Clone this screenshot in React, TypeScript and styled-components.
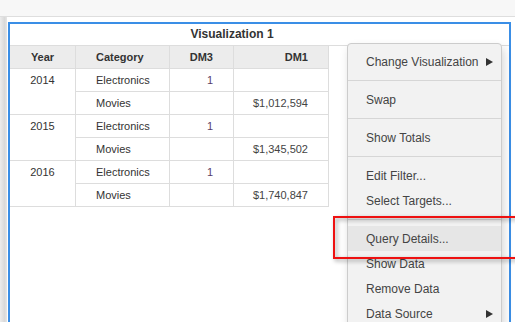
import React from "react";
import styled, { createGlobalStyle } from "styled-components";

const GlobalStyle = createGlobalStyle`
  html, body { margin: 0; padding: 0; background: #ffffff; }
  body { font-family: "Liberation Sans", Arial, sans-serif; }
  * { box-sizing: border-box; }
`;

const Page = styled.div`
  position: relative;
  width: 515px;
  height: 322px;
  overflow: hidden;
  display: grid;
  grid-template-rows: 17px 1fr;
  background: #ffffff;
`;

const TopBar = styled.div`
  background: #f7f7f7;
  border-bottom: 1px solid #dedede;
`;

const Body = styled.div`
  display: flex;
  min-height: 0;
`;

const LeftRail = styled.div`
  width: 7px;
  flex: none;
  background: linear-gradient(to right, #ececec 0%, #d9d9d9 65%, #e6e6e6 100%);
`;

const Main = styled.div`
  flex: 1;
  padding: 5px 4px 0 1px;
`;

const Widget = styled.div`
  position: relative;
  height: 320px;
  border: 2px solid #3a8ee6;
  background: #ffffff;
`;

const Title = styled.div`
  height: 22px;
  line-height: 21px;
  padding-right: 55px;
  text-align: center;
  font-size: 12px;
  font-weight: bold;
  color: #333333;
  border-bottom: 1px solid #dddddd;
`;

const Grid = styled.div`
  display: grid;
  width: 319px;
  grid-template-columns: 66px 94px 64px 95px;
  grid-auto-rows: 23px;
`;

type Align = "left" | "center" | "right";

const HeadCell = styled.div<{ $align: Align }>`
  display: flex;
  align-items: center;
  justify-content: ${(p) =>
    p.$align === "left" ? "flex-start" : p.$align === "right" ? "flex-end" : "center"};
  padding: ${(p) => (p.$align === "left" ? "0 0 0 20px" : p.$align === "right" ? "0 20px 0 0" : "0")};
  background: #ececec;
  border-right: 1px solid #dddddd;
  border-bottom: 1px solid #dddddd;
  font-size: 11px;
  font-weight: bold;
  color: #333333;
`;

const Cell = styled.div<{ $align: Align; $color?: string; $span?: number }>`
  display: flex;
  align-items: flex-start;
  line-height: 22px;
  justify-content: ${(p) =>
    p.$align === "left" ? "flex-start" : p.$align === "right" ? "flex-end" : "center"};
  padding: ${(p) => (p.$align === "left" ? "0 0 0 20px" : p.$align === "right" ? "0 20px 0 0" : "0")};
  grid-row: span ${(p) => p.$span ?? 1};
  border-right: 1px solid #dddddd;
  border-bottom: 1px solid #dddddd;
  font-size: 11px;
  color: ${(p) => p.$color ?? "#333333"};
`;

const Menu = styled.div`
  position: absolute;
  left: 337px;
  top: 19px;
  width: 155px;
  height: 320px;
  background: #f2f2f2;
  border: 1px solid #cccccc;
  border-radius: 4px;
  box-shadow: 2px 5px 10px rgba(0, 0, 0, 0.16);
  font-size: 12px;
  color: #444444;
`;

const MenuGroup = styled.div`
  padding: 6px 0;
  border-bottom: 1px solid #d6d6d6;
  &:first-child { padding-top: 5px; }
  &:last-child { border-bottom: none; }
`;

const MenuItem = styled.div<{ $active?: boolean }>`
  display: flex;
  align-items: center;
  justify-content: space-between;
  height: 25px;
  padding: 0 8px 0 18px;
  background: ${(p) => (p.$active ? "#e6e6e6" : "transparent")};
`;

const Arrow = styled.svg`
  width: 7px;
  height: 8px;
  fill: #333333;
`;

const Callout = styled.div`
  position: absolute;
  left: 333px;
  top: 216px;
  width: 200px;
  height: 43px;
  border: 2px solid #ee1111;
  filter: drop-shadow(2px 2px 2px rgba(0, 0, 0, 0.4));
  pointer-events: none;
`;

const rows = [
  { year: "2014", dm1: "$1,012,594" },
  { year: "2015", dm1: "$1,345,502" },
  { year: "2016", dm1: "$1,740,847" },
];

const groups: { label: string; sub?: boolean; active?: boolean }[][] = [
  [{ label: "Change Visualization", sub: true }],
  [{ label: "Swap" }],
  [{ label: "Show Totals" }],
  [{ label: "Edit Filter..." }, { label: "Select Targets..." }],
  [
    { label: "Query Details...", active: true },
    { label: "Show Data" },
    { label: "Remove Data" },
    { label: "Data Source", sub: true },
  ],
];

export default function App() {
  return (
    <>
      <GlobalStyle />
      <Page>
        <TopBar />
        <Body>
          <LeftRail />
          <Main>
            <Widget>
              <Title>Visualization 1</Title>
              <Grid>
                <HeadCell $align="center">Year</HeadCell>
                <HeadCell $align="left">Category</HeadCell>
                <HeadCell $align="right">DM3</HeadCell>
                <HeadCell $align="right">DM1</HeadCell>
                {rows.map((r) => (
                  <React.Fragment key={r.year}>
                    <Cell $align="center" $span={2}>{r.year}</Cell>
                    <Cell $align="left">Electronics</Cell>
                    <Cell $align="right" $color="#5a3c68">1</Cell>
                    <Cell $align="right" $color="#444444"></Cell>
                    <Cell $align="left">Movies</Cell>
                    <Cell $align="right"></Cell>
                    <Cell $align="right" $color="#444444">{r.dm1}</Cell>
                  </React.Fragment>
                ))}
              </Grid>
              <Menu>
                {groups.map((g, i) => (
                  <MenuGroup key={i}>
                    {g.map((it) => (
                      <MenuItem key={it.label} $active={it.active}>
                        <span>{it.label}</span>
                        {it.sub && (
                          <Arrow viewBox="0 0 7 8">
                            <polygon points="0,0 7,4 0,8" />
                          </Arrow>
                        )}
                      </MenuItem>
                    ))}
                  </MenuGroup>
                ))}
              </Menu>
            </Widget>
          </Main>
        </Body>
        <Callout />
      </Page>
    </>
  );
}
